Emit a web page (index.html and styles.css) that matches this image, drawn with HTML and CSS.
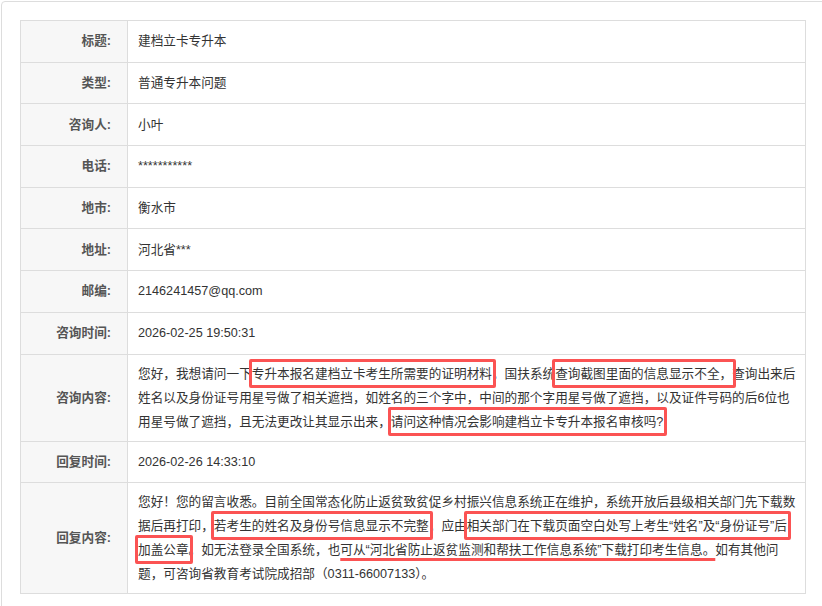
FILE: index.html
```html
<!DOCTYPE html>
<html lang="zh-CN">
<head>
    <meta charset="UTF-8">
    <meta name="viewport" content="width=device-width, initial-scale=1.0">
    <title>咨询详情</title>
    <link rel="stylesheet" href="styles.css">
</head>
<body>
    <div class="panel">
        <table class="info">
            <tr class="row">
                <th>标题:</th>
                <td>建档立卡专升本</td>
            </tr>
            <tr class="row">
                <th>类型:</th>
                <td>普通专升本问题</td>
            </tr>
            <tr class="row">
                <th>咨询人:</th>
                <td>小叶</td>
            </tr>
            <tr class="row">
                <th>电话:</th>
                <td>***********</td>
            </tr>
            <tr class="row">
                <th>地市:</th>
                <td>衡水市</td>
            </tr>
            <tr class="row">
                <th>地址:</th>
                <td>河北省***</td>
            </tr>
            <tr class="row">
                <th>邮编:</th>
                <td>2146241457@qq.com</td>
            </tr>
            <tr class="row">
                <th>咨询时间:</th>
                <td>2026-02-25 19:50:31</td>
            </tr>
            <tr>
                <th>咨询内容:</th>
                <td class="long">您好，我想请问一下<span class="mark">专升本报名建档立卡考生所需要的证明材料</span>，国扶系统<span class="mark">查询截图里面的信息显示不全，</span>查询出来后<br>姓名以及身份证号用星号做了相关遮挡，如姓名的三个字中，中间的那个字用星号做了遮挡，以及证件号码的后6位也<br>用星号做了遮挡，且无法更改让其显示出来，<span class="mark">请问这种情况会影响建档立卡专升本报名审核吗?</span></td>
            </tr>
            <tr class="row">
                <th>回复时间:</th>
                <td>2026-02-26 14:33:10</td>
            </tr>
            <tr>
                <th>回复内容:</th>
                <td class="long">您好！您的留言收悉。目前全国常态化防止返贫致贫促乡村振兴信息系统正在维护，系统开放后县级相关部门先下载数<br>据后再打印，<span class="mark">若考生的姓名及身份号信息显示不完整</span>，应由<span class="mark">相关部门在下载页面空白处写上考生“姓名”及“身份证号”后</span><br><span class="mark">加盖公章</span>。如无法登录全国系统，也<span class="line">可从“河北省防止返贫监测和帮扶工作信息系统”下载打印考生信息。</span>如有其他问<br>题，可咨询省教育考试院成招部（0311-66007133）。</td>
            </tr>
        </table>
    </div>
</body>
</html>
```

FILE: styles.css
```css
body {
    margin: 0;
    padding: 1px 0 0 1px;
    background-color: #fff;
    font-family: 'Liberation Sans', 'Noto Sans CJK SC', sans-serif;
    font-size: 12.65px;
    color: #333;
}

.panel {
    border: 1px solid #ddd;
    border-radius: 4px;
    padding: 18px 0 40px 18px;
    width: 840px;
}

.info {
    border-collapse: collapse;
    width: 786px;
}

.info th,
.info td {
    border: 1px solid #ddd;
    line-height: 24px;
    padding: 7px 10px;
    vertical-align: middle;
}

.info th {
    width: 80px;
    background-color: #f7f7f7;
    color: #555;
    font-weight: bold;
    text-align: right;
    padding-right: 16px;
    white-space: nowrap;
}

.info td {
    text-align: left;
    padding-right: 4px;
    white-space: nowrap;
}

.info .row {
    height: 41.7px;
}

/* red boxes drawn over the text */
.mark {
    position: relative;
}

.mark::after {
    content: '';
    position: absolute;
    left: -3px;
    right: -4px;
    top: -8px;
    bottom: -7px;
    border: 3px solid #fb5353;
    border-radius: 2px;
}

.line {
    text-decoration: underline;
    text-decoration-color: #fb5353;
    text-decoration-thickness: 3px;
    text-underline-offset: 4px;
}
```
